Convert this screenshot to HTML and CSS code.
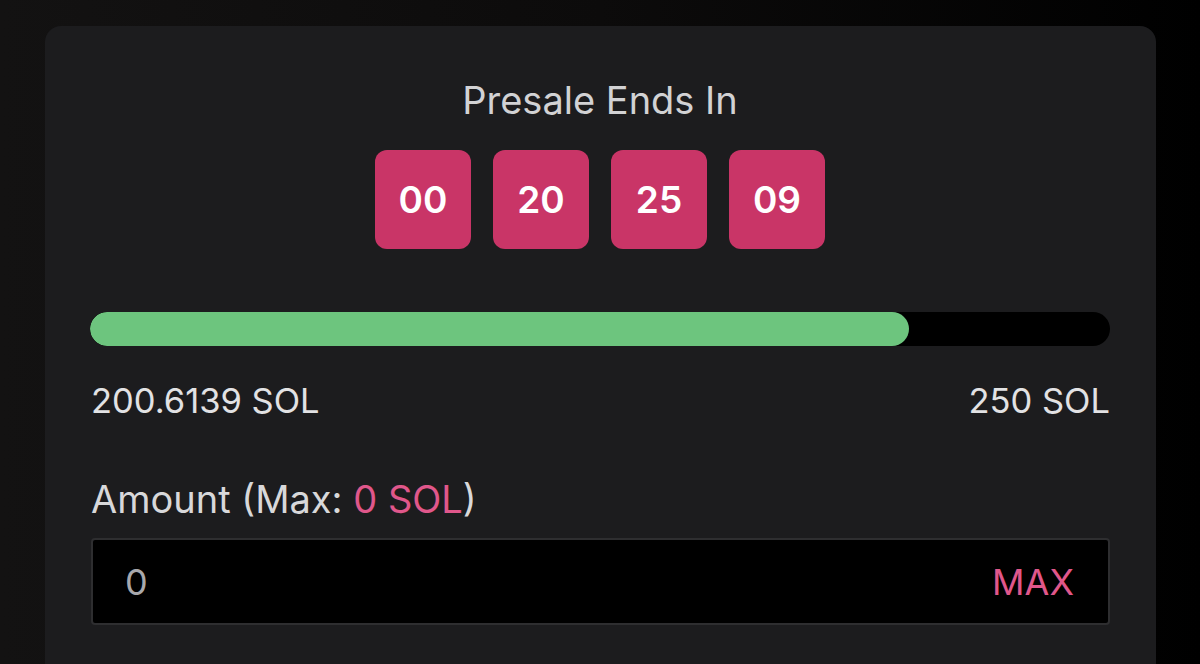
FILE: index.html
```html
<!DOCTYPE html>
<html>
<head>
<meta charset="utf-8">
<link rel="stylesheet" href="styles.css">
</head>
<body>
<div class="page">
  <div class="card">
    <h2 class="title">Presale Ends In</h2>
    <div class="timer">
      <div class="tbox">00</div>
      <div class="tbox">20</div>
      <div class="tbox">25</div>
      <div class="tbox">09</div>
    </div>
    <div class="track"><div class="fill" style="width:80.25%"></div></div>
    <div class="amounts">
      <span>200.6139 SOL</span>
      <span>250 SOL</span>
    </div>
    <div class="label">Amount (Max: <span class="pink">0 SOL</span>)</div>
    <div class="input">
      <span class="value">0</span>
      <span class="max">MAX</span>
    </div>
  </div>
</div>
</body>
</html>
```
FILE: styles.css
```css
html, body {
  margin: 0;
  padding: 0;
  width: 1200px;
  height: 664px;
  overflow: hidden;
}
body {
  background: linear-gradient(90deg, #131212 0%, #0c0b0b 50%, #000 100%);
  font-family: Inter, "Liberation Sans", sans-serif;
}
.page {
  padding: 26px 44px 0 45px;
}
.card {
  background: #1c1c1e;
  border-radius: 16px;
  padding: 51px 46px 40px 45px;
  height: 680px;
  box-sizing: border-box;
}
.title {
  margin: 0;
  text-align: center;
  font-size: 38px;
  font-weight: 400;
  color: #d2d2d4;
  line-height: 46px;
}
.timer {
  display: flex;
  justify-content: center;
  gap: 22px;
  margin-top: 27px;
}
.tbox {
  width: 96px;
  height: 99px;
  border-radius: 12px;
  background: #c93567;
  color: #fff;
  font-size: 37px;
  font-weight: 600;
  display: flex;
  align-items: center;
  justify-content: center;
}
.track {
  margin-top: 63px;
  height: 34px;
  border-radius: 17px;
  background: #000;
  overflow: hidden;
}
.fill {
  height: 100%;
  background: #6dc57e;
  border-radius: 17px;
}
.amounts {
  display: flex;
  justify-content: space-between;
  margin-top: 35px;
  font-size: 34.5px;
  color: #e2e2e4;
  line-height: 40px;
  padding-left: 1px;
}
.label {
  margin-top: 56px;
  font-size: 38px;
  color: #d8d8da;
  line-height: 44px;
  padding-left: 1px;
}
.pink { color: #e0578b; }
.input {
  margin-top: 17px;
  margin-left: 1px;
  height: 87px;
  box-sizing: border-box;
  background: #000;
  border: 2px solid #2e2e30;
  border-radius: 4px;
  display: flex;
  align-items: center;
  justify-content: space-between;
  padding: 0 34px 0 32px;
  font-size: 36px;
}
.value { color: #a8a8ac; }
.max { color: #e0578b; }
```
